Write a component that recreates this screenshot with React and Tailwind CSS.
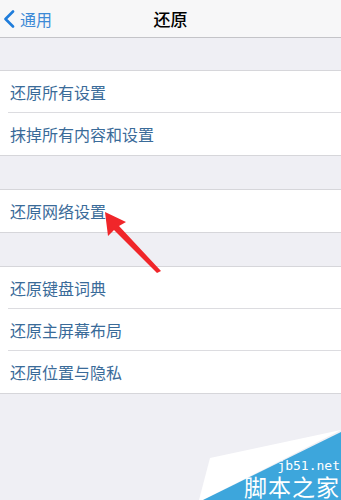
import React from "react";

const Row = ({ label, last }) => (
  <div className="h-[42px] pl-[10px] flex items-center relative">
    <span className="text-[16px] text-[#3a6b99]">{label}</span>
    {!last && <div className="absolute left-[8px] right-0 bottom-0 h-px bg-[#dcdce0]" />}
  </div>
);

const Group = ({ items }) => (
  <div className="bg-white border-y border-[#d6d6da]">
    {items.map((t, i) => (
      <Row key={t} label={t} last={i === items.length - 1} />
    ))}
  </div>
);

const App = () => {
  return (
    <div
      className="relative w-[341px] h-[500px] bg-[#efeff4] overflow-hidden"
      style={{ fontFamily: '"Noto Sans CJK SC", "Noto Sans", sans-serif' }}
    >
      {/* nav bar */}
      <div className="h-[38px] bg-[#f7f7f8] border-b border-[#c4c4c8] flex items-center relative">
        <div className="flex items-center pl-[3px] gap-[5px]">
          <svg width="12" height="18" viewBox="0 0 12 18">
            <path d="M10 1.5 L2.5 9 L10 16.5" fill="none" stroke="#1f7ddb" strokeWidth="2.6" strokeLinecap="round" strokeLinejoin="round" />
          </svg>
          <span className="text-[16px] text-[#3d8ad6]">通用</span>
        </div>
        <span className="absolute left-0 right-0 text-center text-[17px] font-medium text-black">还原</span>
      </div>

      <div className="h-[32px]" />
      <Group items={["还原所有设置", "抹掉所有内容和设置"]} />
      <div className="h-[33px]" />
      <Group items={["还原网络设置"]} />
      <div className="h-[33px]" />
      <Group items={["还原键盘词典", "还原主屏幕布局", "还原位置与隐私"]} />

      {/* red arrow */}
      <svg className="absolute left-0 top-0" width="341" height="500" viewBox="0 0 341 500">
        <polygon points="105,212 126,222 119,226 161,271 157,273 114,230 108,236" fill="#f0262a" />
      </svg>

      {/* watermark */}
      <svg className="absolute left-0 top-0" width="341" height="500" viewBox="0 0 341 500">
        <polygon points="199,500 210,458 341,430 203,500" fill="#ffffff" />
        <polygon points="203,500 341,432 341,500" fill="#3da6dc" />
      </svg>
      <div className="absolute right-[1px] bottom-0 flex flex-col items-end text-white">
        <span className="text-[13px] leading-[15px]" style={{ fontFamily: '"DejaVu Sans Mono", monospace' }}>jb51.net</span>
        <span className="text-[23px] leading-[27px] tracking-[1px]">脚本之家</span>
      </div>
    </div>
  );
};

export default App;
